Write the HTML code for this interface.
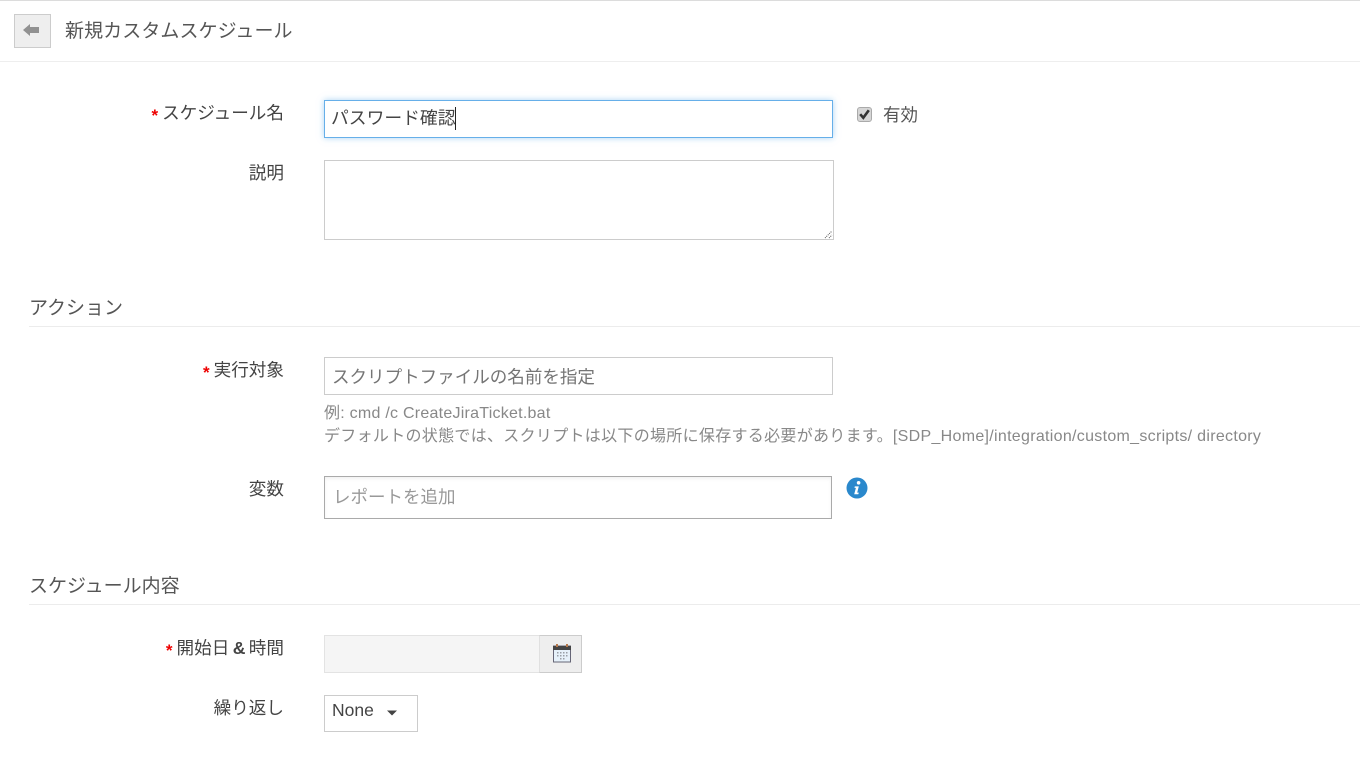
<!DOCTYPE html>
<html lang="ja">
<head>
<meta charset="utf-8">
<style>
html,body{margin:0;padding:0;width:1360px;height:760px;overflow:hidden;background:#fff}
body{position:relative;font-family:"Liberation Sans","Noto Sans CJK JP",sans-serif;color:#444}
.a{position:absolute;white-space:nowrap;line-height:1}
.box{position:absolute;box-sizing:border-box;background:#fff}
.lbl{font-size:17.6px;color:#444;right:1076px}
.star{color:#e00;font-size:17px;font-weight:bold;margin-right:4px;position:relative;top:2px}
.hr{position:absolute;height:1px;background:#ececec}
</style>
</head>
<body>
<div class="hr" style="left:0;top:0;width:1360px;height:1px;background:#dcdcdc"></div>
<div class="hr" style="left:0;top:61px;width:1360px;background:#eee"></div>

<div class="box" style="left:14px;top:14px;width:37px;height:34px;background:#eee;border:1px solid #ccc"></div>
<svg class="a" style="left:23px;top:23px" width="17" height="14" viewBox="0 0 17 14"><path d="M0 7 L7 1 V4 H16 V10 H7 V13 Z" fill="#919191"/></svg>
<div class="a" style="left:65px;top:22px;font-size:19px;letter-spacing:.08px;color:#555">新規カスタムスケジュール</div>

<div class="a lbl" style="top:105px"><span class="star">*</span>スケジュール名</div>
<div class="box" style="left:324px;top:100px;width:509px;height:38px;border:1px solid #66afe9;box-shadow:0 0 6px rgba(102,175,233,.55)"></div>
<div class="a" style="left:331px;top:110px;font-size:17.8px;color:#444">パスワード確認</div>
<div class="a" style="left:455px;top:107px;width:1px;height:23px;background:#222"></div>

<svg class="a" style="left:857px;top:107px" width="16" height="16" viewBox="0 0 16 16"><rect x=".5" y=".5" width="14" height="14" rx="2.5" fill="#d6d6d6" stroke="#aaa"/><path d="M3.2 7.2 L6.3 10.8 L11.8 3.2" fill="none" stroke="#333" stroke-width="2.6"/></svg>
<div class="a" style="left:883px;top:107px;font-size:17.5px;color:#555">有効</div>

<div class="a lbl" style="top:165px">説明</div>
<div class="box" style="left:324px;top:160px;width:510px;height:80px;border:1px solid #ccc"></div>
<svg class="a" style="left:824px;top:230px" width="9" height="9" viewBox="0 0 9 9"><path d="M1 8 L8 1 M5 8 L8 5" stroke="#555" stroke-width="1" stroke-dasharray="1 1" fill="none"/></svg>

<div class="a" style="left:29px;top:299px;font-size:19px;color:#555">アクション</div>
<div class="hr" style="left:29px;top:326px;width:1331px"></div>

<div class="a lbl" style="top:362px"><span class="star">*</span>実行対象</div>
<div class="box" style="left:324px;top:357px;width:509px;height:38px;border:1px solid #ccc"></div>
<div class="a" style="left:332px;top:369px;font-size:17.55px;color:#757575">スクリプトファイルの名前を指定</div>
<div class="a" style="left:324px;top:406px;font-size:16px;letter-spacing:.25px;color:#888">例: cmd /c CreateJiraTicket.bat</div>
<div class="a" style="left:324px;top:429px;font-size:16px;letter-spacing:.3px;color:#888">デフォルトの状態では、スクリプトは以下の場所に保存する必要があります。[SDP_Home]/integration/custom_scripts/ directory</div>

<div class="a lbl" style="top:481px">変数</div>
<div class="box" style="left:324px;top:476px;width:508px;height:43px;border:1px solid #aaa;box-shadow:inset 0 2px 4px -1px rgba(0,0,0,.08)"></div>
<div class="a" style="left:333px;top:489px;font-size:17.5px;color:#999">レポートを追加</div>
<svg class="a" style="left:846px;top:477px" width="22" height="22" viewBox="0 0 22 22"><circle cx="11" cy="11" r="10.5" fill="#2a88cc"/><circle cx="12.6" cy="5.8" r="1.8" fill="#fff"/><path d="M8.8 9.4 H12.8 L11.2 15.6 H12.8 L12.3 17.2 H8.2 L9.9 10.9 H8.5 Z" fill="#fff"/></svg>

<div class="a" style="left:29px;top:577px;font-size:19px;color:#555">スケジュール内容</div>
<div class="hr" style="left:29px;top:604px;width:1331px"></div>

<div class="a lbl" style="top:640px;word-spacing:-1.5px"><span class="star">*</span>開始日 <b style="font-weight:bold">&amp;</b> 時間</div>
<div class="box" style="left:324px;top:635px;width:216px;height:38px;background:#f5f5f5;border:1px solid #e3e3e3;border-right:0"></div>
<div class="box" style="left:539px;top:635px;width:43px;height:38px;background:#eee;border:1px solid #ccc;border-left:1px solid #e0e0e0"></div>
<svg class="a" style="left:553px;top:644px" width="18" height="19" viewBox="0 0 18 19"><rect x=".5" y="2" width="17" height="16" fill="#e6f1fa" stroke="#667"/><rect x="0" y="2" width="18" height="4" fill="#444"/><rect x="3" y="0" width="2" height="3" fill="#b5784a"/><rect x="13" y="0" width="2" height="3" fill="#b5784a"/><g fill="#9a9fa6"><rect x="4" y="8" width="1.5" height="1.5"/><rect x="7" y="8" width="1.5" height="1.5"/><rect x="10" y="8" width="1.5" height="1.5"/><rect x="13" y="8" width="1.5" height="1.5"/><rect x="4" y="11" width="1.5" height="1.5"/><rect x="7" y="11" width="1.5" height="1.5"/><rect x="10" y="11" width="1.5" height="1.5"/><rect x="13" y="11" width="1.5" height="1.5"/><rect x="7" y="14" width="1.5" height="1.5"/><rect x="10" y="14" width="1.5" height="1.5"/></g></svg>

<div class="a lbl" style="top:700px">繰り返し</div>
<div class="box" style="left:324px;top:695px;width:94px;height:37px;border:1px solid #ccc"></div>
<div class="a" style="left:332px;top:702px;font-size:17.5px;color:#444">None</div>
<svg class="a" style="left:386px;top:710px" width="12" height="6" viewBox="0 0 12 6"><path d="M1 0.5 H11 L6 5.5 Z" fill="#444"/></svg>
</body>
</html>
